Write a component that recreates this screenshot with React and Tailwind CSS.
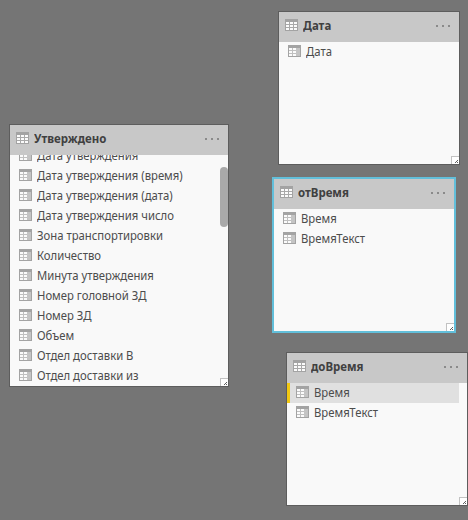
function TableIcon({ column = false }) {
  return (
    <svg className="block h-3 w-[13px] shrink-0" viewBox="0 0 13 12" shapeRendering="crispEdges">
      <rect width="13" height="12" fill="#a3a3a3" />
      <rect x="1" y="3" width="11" height="8" fill={column ? "#c4c4c4" : "#fbfbfb"} />
      {column && <rect x="1" y="3" width="7" height="8" fill="#fbfbfb" />}
      {column ? (
        <path d="M1 5.5H8M1 8.5H8M4.5 3V11" stroke="#c0c0c0" />
      ) : (
        <path d="M1 5.5H12M1 8.5H12M4.5 3V11M8.5 3V11" stroke="#a9a9a9" />
      )}
    </svg>
  );
}

function Grip() {
  return (
    <div className="absolute right-0 bottom-0 h-2 w-2 border-t border-l border-[#c2c2c2] bg-white">
      <svg className="block h-[7px] w-[7px]" viewBox="0 0 7 7" shapeRendering="crispEdges">
        <path d="M5 3h1v1h-1zM4 4h1v1h-1zM3 5h1v1h-1zM5 5h1v1h-1z" fill="#606060" />
      </svg>
    </div>
  );
}

function Field({ name, selected = false }) {
  return (
    <li
      className={
        selected
          ? "mr-2 flex h-5 gap-[5px] border-l-[3px] border-[#f2c811] bg-[#e0e0e0] pl-[6px]"
          : "flex h-5 gap-[5px] pl-[9px]"
      }
    >
      <div className="pt-[3px]">
        <TableIcon column />
      </div>
      <span className="origin-left scale-x-[0.942] text-[12px] leading-5 whitespace-nowrap text-[#4c4c4c]">{name}</span>
    </li>
  );
}

function TableCard({ title, fields, selectedField, className, listClass = "", scrollbar = false }) {
  return (
    <section className={`absolute flex flex-col bg-[#f9f9f9] ${className}`}>
      <header className="flex h-[30px] shrink-0 bg-[#c8c8c8] pl-[6px]">
        <div className="pt-[7px]">
          <TableIcon />
        </div>
        <h2 className="ml-[5px] flex-1 origin-left scale-x-[0.955] text-[12px] leading-[28px] font-bold whitespace-nowrap text-[#404040]">
          {title}
        </h2>
        <svg className="mt-[13px] mr-2 h-[3px] w-4" viewBox="0 0 16 3">
          <path d="M1 0h2v2H1zM7 0h2v2H7zM13 0h2v2h-2z" fill="#8a8a8a" />
        </svg>
      </header>
      <div className="min-h-0 flex-1 overflow-hidden">
        <ul className={listClass}>
          {fields.map((name) => (
            <Field key={name} name={name} selected={name === selectedField} />
          ))}
        </ul>
      </div>
      {scrollbar && <div className="absolute top-[42px] right-0 h-[60px] w-2 rounded-full bg-[#a9a9a9]" />}
      <Grip />
    </section>
  );
}

const approved = [
  "Дата утверждения",
  "Дата утверждения (время)",
  "Дата утверждения (дата)",
  "Дата утверждения число",
  "Зона транспортировки",
  "Количество",
  "Минута утверждения",
  "Номер головной ЗД",
  "Номер ЗД",
  "Объем",
  "Отдел доставки В",
  "Отдел доставки из",
];

export default function App() {
  return (
    <main className="relative h-[520px] w-[468px] overflow-hidden bg-[#757575] font-['Noto_Sans','Open_Sans',sans-serif]">
      <TableCard
        title="Утверждено"
        fields={approved}
        listClass="-mt-[9px]"
        scrollbar
        className="top-[125px] left-[10px] h-[261px] w-[218px] outline outline-[#5d5d5d]"
      />
      <TableCard
        title="Дата"
        fields={["Дата"]}
        className="top-[12px] left-[279px] h-[152px] w-[180px] outline outline-[#5d5d5d]"
      />
      <TableCard
        title="отВремя"
        fields={["Время", "ВремяТекст"]}
        className="top-[179px] left-[274px] h-[152px] w-[180px] outline-2 outline-[#62bfda]"
      />
      <TableCard
        title="доВремя"
        fields={["Время", "ВремяТекст"]}
        selectedField="Время"
        className="top-[353px] left-[287px] h-[152px] w-[180px] outline outline-[#5d5d5d]"
      />
    </main>
  );
}
